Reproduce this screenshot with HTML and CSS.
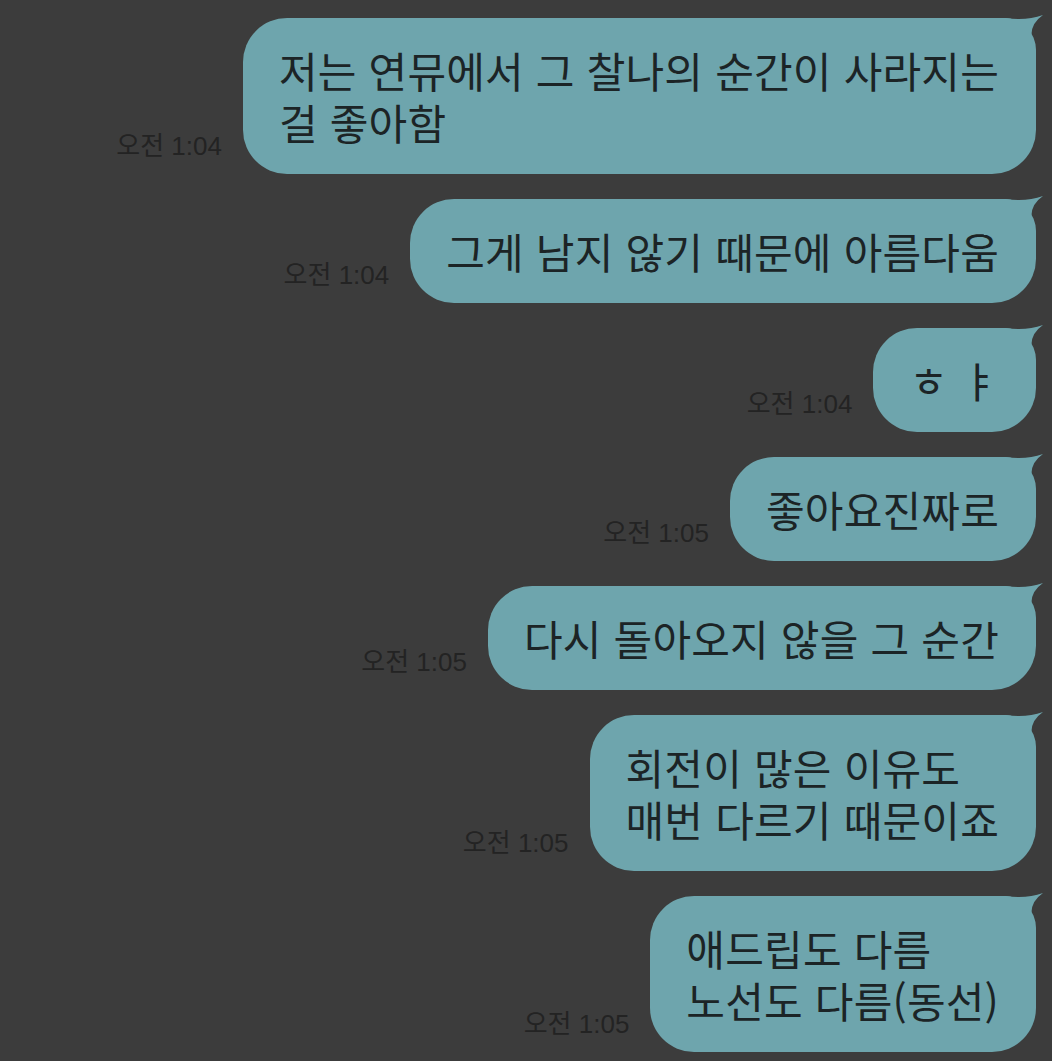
FILE: index.html
```html
<!doctype html>
<html lang="ko">
  <head>
    <meta charset="UTF-8" />
    <meta name="viewport" content="width=device-width, initial-scale=1.0" />
    <title>Chat</title>
    <link rel="stylesheet" href="styles.css">
  </head>
  <body>
    <div class="chat">
      <div class="row">
        <span class="time">오전 1:04</span>
        <div class="bubble">
          저는 연뮤에서 그 찰나의 순간이 사라지는<br>걸 좋아함
          <svg class="tail" viewBox="0 0 60 40"><path d="M0 4 L22 4 Q42 7 59 1 Q40 14 52 38 L52 40 L0 40 Z" /></svg>
        </div>
      </div>
      <div class="row">
        <span class="time">오전 1:04</span>
        <div class="bubble">
          그게 남지 않기 때문에 아름다움
          <svg class="tail" viewBox="0 0 60 40"><path d="M0 4 L22 4 Q42 7 59 1 Q40 14 52 38 L52 40 L0 40 Z" /></svg>
        </div>
      </div>
      <div class="row">
        <span class="time">오전 1:04</span>
        <div class="bubble">
          ㅎ ㅑ
          <svg class="tail" viewBox="0 0 60 40"><path d="M0 4 L22 4 Q42 7 59 1 Q40 14 52 38 L52 40 L0 40 Z" /></svg>
        </div>
      </div>
      <div class="row">
        <span class="time">오전 1:05</span>
        <div class="bubble">
          좋아요진짜로
          <svg class="tail" viewBox="0 0 60 40"><path d="M0 4 L22 4 Q42 7 59 1 Q40 14 52 38 L52 40 L0 40 Z" /></svg>
        </div>
      </div>
      <div class="row">
        <span class="time">오전 1:05</span>
        <div class="bubble">
          다시 돌아오지 않을 그 순간
          <svg class="tail" viewBox="0 0 60 40"><path d="M0 4 L22 4 Q42 7 59 1 Q40 14 52 38 L52 40 L0 40 Z" /></svg>
        </div>
      </div>
      <div class="row">
        <span class="time">오전 1:05</span>
        <div class="bubble">
          회전이 많은 이유도<br>매번 다르기 때문이죠
          <svg class="tail" viewBox="0 0 60 40"><path d="M0 4 L22 4 Q42 7 59 1 Q40 14 52 38 L52 40 L0 40 Z" /></svg>
        </div>
      </div>
      <div class="row">
        <span class="time">오전 1:05</span>
        <div class="bubble">
          애드립도 다름<br>노선도 다름(동선)
          <svg class="tail" viewBox="0 0 60 40"><path d="M0 4 L22 4 Q42 7 59 1 Q40 14 52 38 L52 40 L0 40 Z" /></svg>
        </div>
      </div>
    </div>
  </body>
</html>
```

FILE: styles.css
```css
html,
body {
  margin: 0;
  background-color: #3c3c3c;
}
body {
  font-family: "Noto Sans CJK KR", "Noto Sans", sans-serif;
}
.chat {
  display: flex;
  flex-direction: column;
  gap: 25px;
  padding: 18px 16px 12px 16px;
}
.row {
  display: flex;
  justify-content: flex-end;
  align-items: flex-end;
  gap: 21px;
}
.time {
  font-family: "Liberation Sans", "Noto Sans CJK KR", sans-serif;
  font-size: 26px;
  line-height: 30px;
  color: #232323;
  margin-bottom: 13px;
  white-space: nowrap;
}
.bubble {
  position: relative;
  background-color: #6ea5ad;
  color: #1c2426;
  font-size: 42px;
  line-height: 52px;
  letter-spacing: 0.2px;
  padding: 26px 37px 26px 36px;
  border-radius: 44px;
  border-top-right-radius: 32px;
  white-space: nowrap;
}
.tail {
  position: absolute;
  top: -4px;
  right: -8px;
  width: 60px;
  height: 40px;
  fill: #6ea5ad;
}
```
